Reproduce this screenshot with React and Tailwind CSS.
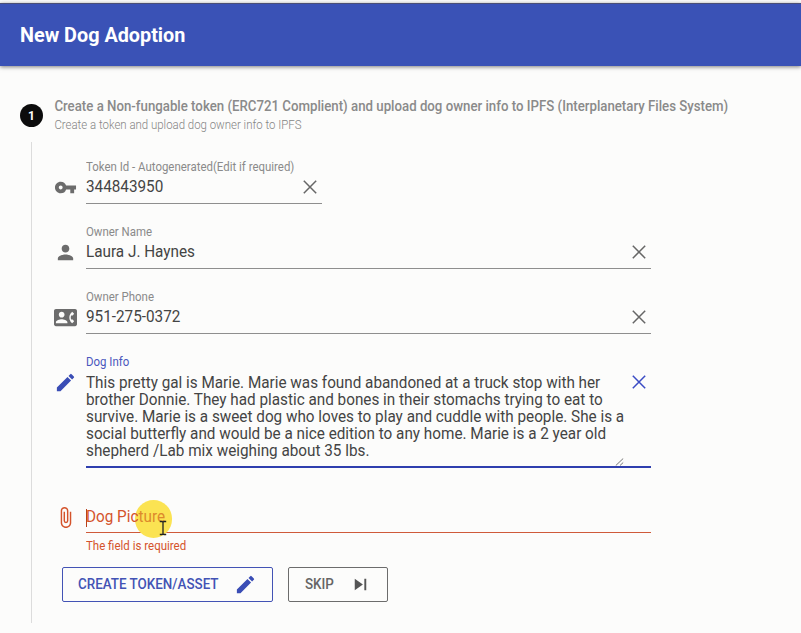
import { MdVpnKey, MdPerson, MdContactPhone, MdEdit, MdAttachFile, MdSkipNext } from "react-icons/md";

function Clear({ className = "" }) {
  return (
    <svg className={`h-[14px] w-[14px] shrink-0 ${className}`} viewBox="0 0 14 14" fill="none" stroke="currentColor" strokeWidth="1.5">
      <path d="M0.8 0.8 13.2 13.2M13.2 0.8 0.8 13.2" />
    </svg>
  );
}

function Field({ icon: Icon, label, value, width }) {
  return (
    <div className="flex h-[65px]">
      <Icon className="mt-[20px] mr-[9px] h-[23px] w-[23px] shrink-0 text-[#6c6c6c]" />
      <div className={`flex h-[48px] flex-col border-b border-[#8e8e8e] ${width}`}>
        <div className="h-[21px] origin-left scale-x-[0.953] text-[12px] leading-[22px] whitespace-nowrap text-[#8a8a8a]">{label}</div>
        <div className="flex items-center justify-between pr-[5px]">
          <span className="origin-left scale-x-[0.955] text-[16px] leading-[20px] text-[#444]">{value}</span>
          <Clear className="text-[#666]" />
        </div>
      </div>
    </div>
  );
}

export default function App() {
  return (
    <div className="h-[633px] w-[801px] overflow-hidden bg-[#fcfcfb] pt-[3px] font-['Roboto',sans-serif]">
      <header className="flex h-[63px] items-center border-t border-[#4b4f76] bg-[#3a52b6] pl-5 shadow-[0_1px_4px_rgba(0,0,0,0.5)]">
        <h1 className="origin-left scale-x-[0.99] text-[20px] leading-6 font-bold text-white">New Dog Adoption</h1>
      </header>

      <main className="flex pl-[20px]">
        <div className="flex w-[23px] shrink-0 flex-col items-center pt-[38px]">
          <div className="flex h-[23px] w-[23px] items-center justify-center rounded-full bg-[#0c0c0c] text-[12px] font-bold text-white">1</div>
          <div className="mt-[15px] h-[481px] w-px bg-[#dcdcdc]" />
        </div>

        <section className="ml-[11px] w-[700px] pt-[31px]">
          <div className="h-[18px] w-[712px] origin-left translate-x-[0.4px] scale-x-[0.946] text-[14px] leading-[18px] font-medium whitespace-nowrap text-[#8a8a8a]">
            Create a Non-fungable token (ERC721 Complient) and upload dog owner info to IPFS (Interplanetary Files System)
          </div>
          <div className="h-[41px] origin-left translate-x-[0.4px] scale-x-[0.953] pt-[2px] text-[12px] leading-[16px] font-light text-[#858585]">
            Create a token and upload dog owner info to IPFS
          </div>

          <Field icon={MdVpnKey} label="Token Id - Autogenerated(Edit if required)" value="344843950" width="w-[236px]" />
          <Field icon={MdPerson} label="Owner Name" value="Laura J. Haynes" width="w-[565px]" />
          <Field icon={MdContactPhone} label="Owner Phone" value="951-275-0372" width="w-[565px]" />

          <div className="flex h-[155px]">
            <MdEdit className="mt-[20px] mr-[9px] h-[23px] w-[23px] shrink-0 text-[#3a4db5]" />
            <div className="h-[117px] w-[565px] border-b-2 border-[#2f3fae]">
              <div className="h-[22px] origin-left scale-x-[0.953] text-[12px] leading-[22px] text-[#4a57bd]">Dog Info</div>
              <div className="flex pr-[5px]">
                <div className="relative h-[93px] w-[540px]">
                  <p className="origin-left scale-x-[0.955] pt-[0.6px] text-[16px] leading-[17.2px] whitespace-nowrap text-[#444]">
                    This pretty gal is Marie. Marie was found abandoned at a truck stop with her<br />
                    brother Donnie. They had plastic and bones in their stomachs trying to eat to<br />
                    survive. Marie is a sweet dog who loves to play and cuddle with people. She is a<br />
                    social butterfly and would be a nice edition to any home. Marie is a 2 year old<br />
                    shepherd /Lab mix weighing about 35 lbs.
                  </p>
                  <svg className="absolute right-[2px] bottom-0 h-[8px] w-[9px]" viewBox="0 0 9 8" stroke="#777" strokeWidth="1">
                    <path d="M0.8 7.5 8.2 0.5M5 7.5 8.2 4.5" />
                  </svg>
                </div>
                <Clear className="mt-[2px] ml-auto text-[#3a4bc4]" />
              </div>
            </div>
          </div>

          <div className="flex h-[61px]">
            <MdAttachFile className="mr-[9px] h-[23px] w-[23px] shrink-0 text-[#d4532b]" />
            <div className="w-[565px]">
              <div className="relative h-[27px] border-b border-[#cf5a3a] text-[16px] leading-[22px] text-[#d4532b]">
                <div className="absolute top-[-6px] left-[49px] h-[38px] w-[37px] rounded-full bg-[#fbe352]" />
                <div className="relative inline-block h-[22px] origin-left scale-x-[0.955]">
                  Dog Pic<span className="text-[#dd8a2c]">ture</span>
                </div>
                <div className="absolute top-[3px] left-0 h-[18px] w-px bg-[#b8401c]" />
                <svg className="absolute top-[14px] left-[73px] h-[16px] w-[8px]" viewBox="0 0 8 16" fill="none" stroke="#222" strokeWidth="1.3">
                  <path d="M0.8 1.5H3L4 2.3 5 1.5H7.2M4 2.3V13.7M0.8 14.5H3L4 13.7 5 14.5H7.2" />
                </svg>
              </div>
              <div className="origin-left scale-x-[0.957] pt-[5px] text-[12px] leading-[16px] text-[#d4532b]">The field is required</div>
            </div>
          </div>

          <div className="ml-[8px] flex gap-[15px] text-[14px] font-medium">
            <button className="flex h-[35px] w-[211px] items-center rounded-[2px] border border-[#4353b5] pr-[15px] pl-[15px] text-[#4353b5]">
              <span className="origin-left scale-x-[0.957]">CREATE TOKEN/ASSET</span>
              <MdEdit className="ml-auto h-[23px] w-[23px] text-[#3a4db5]" />
            </button>
            <button className="flex h-[35px] w-[100px] items-center rounded-[2px] border border-[#6c6c6c] pr-[15px] pl-[16px] text-[#666]">
              <span className="origin-left scale-x-[0.957]">SKIP</span>
              <MdSkipNext className="ml-auto h-[23px] w-[23px] text-[#555]" />
            </button>
          </div>
        </section>
      </main>
    </div>
  );
}
